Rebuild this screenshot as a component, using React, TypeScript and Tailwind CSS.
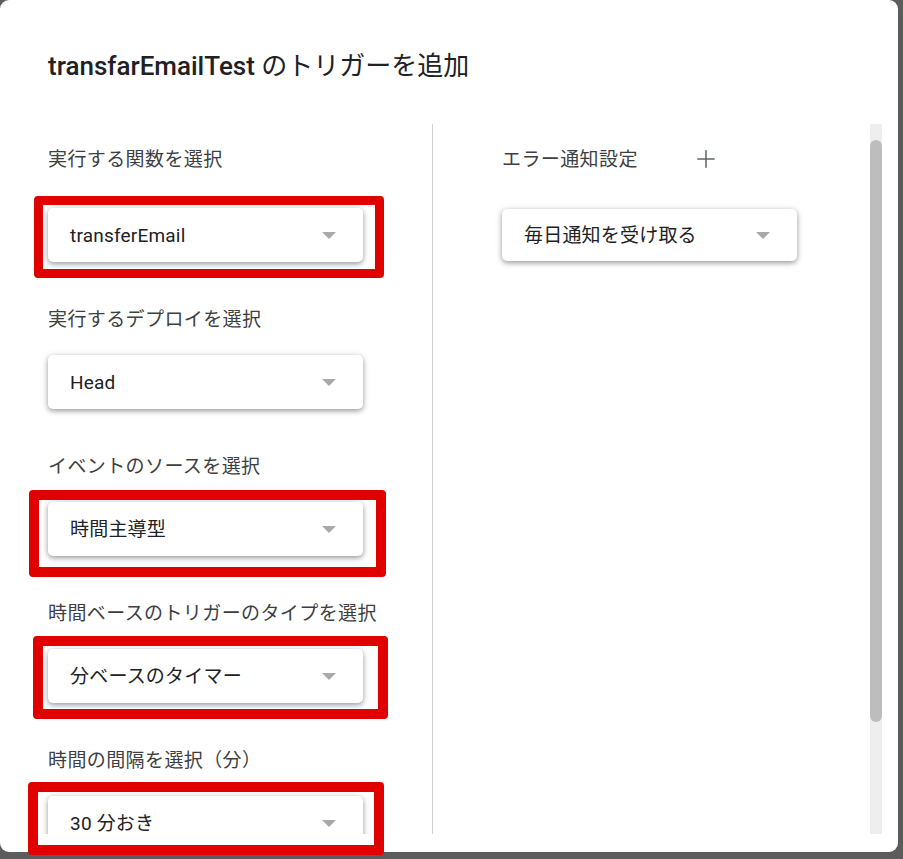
import { Plus } from 'lucide-react';

const font = { fontFamily: 'Roboto, "Noto Sans CJK JP", sans-serif' };

function Caret() {
  return (
    <svg width="14" height="7" viewBox="0 0 14 7" className="shrink-0">
      <path d="M0 0 L14 0 L7 7 Z" fill="#a9a9a9" />
    </svg>
  );
}

function Select({ value, width = 'w-[315px]', height = 'h-[54px]' }: { value: string; width?: string; height?: string }) {
  return (
    <div
      className={`${width} ${height} shrink-0 bg-white rounded-[5px] flex items-center justify-between pl-[22px] pr-[27px] shadow-[0_2px_5px_rgba(0,0,0,0.32),0_1px_8px_rgba(0,0,0,0.12)]`}
    >
      <span className="text-[19px] text-[#202124] leading-none tracking-[0.2px]">{value}</span>
      <Caret />
    </div>
  );
}

function Label({ children }: { children: React.ReactNode }) {
  return (
    <div className="h-6 pt-[4px] flex items-center text-[19px] tracking-[0.4px] text-[#3c4043] whitespace-nowrap">
      {children}
    </div>
  );
}

export default function App() {
  return (
    <div className="relative w-[903px] h-[859px] bg-[#5c5c5c] overflow-hidden" style={font}>
      <div className="w-[898px] h-[852px] bg-white rounded-[9px] flex flex-col">
        <div className="h-[124px] pl-[48px] flex items-center pt-[8px]">
          <h1 className="text-[26px] text-[#202124] leading-none">
            <span className="font-medium">transfarEmailTest</span>{' '}
            <span className="font-normal">のトリガーを追加</span>
          </h1>
        </div>

        <div className="flex h-[710px] overflow-hidden">
          {/* left column */}
          <div className="w-[432px] pl-[48px] flex flex-col">
            <div className="mt-[22px]">
              <Label>実行する関数を選択</Label>
            </div>
            <div className="mt-[38px] mb-[44px]">
              <Select value="transferEmail" />
            </div>

            <Label>実行するデプロイを選択</Label>
            <div className="mt-[25px] mb-[44px]">
              <Select value="Head" />
            </div>

            <Label>イベントのソースを選択</Label>
            <div className="mt-[25px] mb-[44px]">
              <Select value="時間主導型" />
            </div>

            <Label>時間ベースのトリガーのタイプを選択</Label>
            <div className="mt-[25px] mb-[44px]">
              <Select value="分ベースのタイマー" />
            </div>

            <Label>時間の間隔を選択（分）</Label>
            <div className="mt-[25px]">
              <Select value="30 分おき" />
            </div>
          </div>

          <div className="w-px bg-[#cfcfcf]" />

          {/* right column */}
          <div className="flex-1 pl-[69px] flex flex-col">
            <div className="mt-[22px] h-6 flex items-center">
              <Label>エラー通知設定</Label>
              <Plus className="ml-[54px] mt-[2px] w-[28px] h-[28px] shrink-0 text-[#5f6368]" strokeWidth={1.3} />
            </div>
            <div className="mt-[39px]">
              <Select value="毎日通知を受け取る" width="w-[295px]" height="h-[52px]" />
            </div>
          </div>

          {/* scrollbar */}
          <div className="w-[12px] bg-[#eeeeee] mr-[16px] pt-[16px]">
            <div className="h-[582px] rounded-full bg-[#bdbdbd]" />
          </div>
        </div>
      </div>

      {/* red annotation boxes */}
      <div className="absolute left-[34px] top-[196px] w-[350px] h-[82px] border-[9px] border-[#e00000] rounded-[4px]" />
      <div className="absolute left-[29px] top-[490px] w-[357px] h-[87px] border-[10px] border-[#e00000] rounded-[4px]" />
      <div className="absolute left-[33px] top-[636px] w-[355px] h-[83px] border-[10px] border-[#e00000] rounded-[4px]" />
      <div className="absolute left-[28px] top-[782px] w-[356px] h-[73px] border-[10px] border-[#e00000] rounded-[4px]" />
    </div>
  );
}
